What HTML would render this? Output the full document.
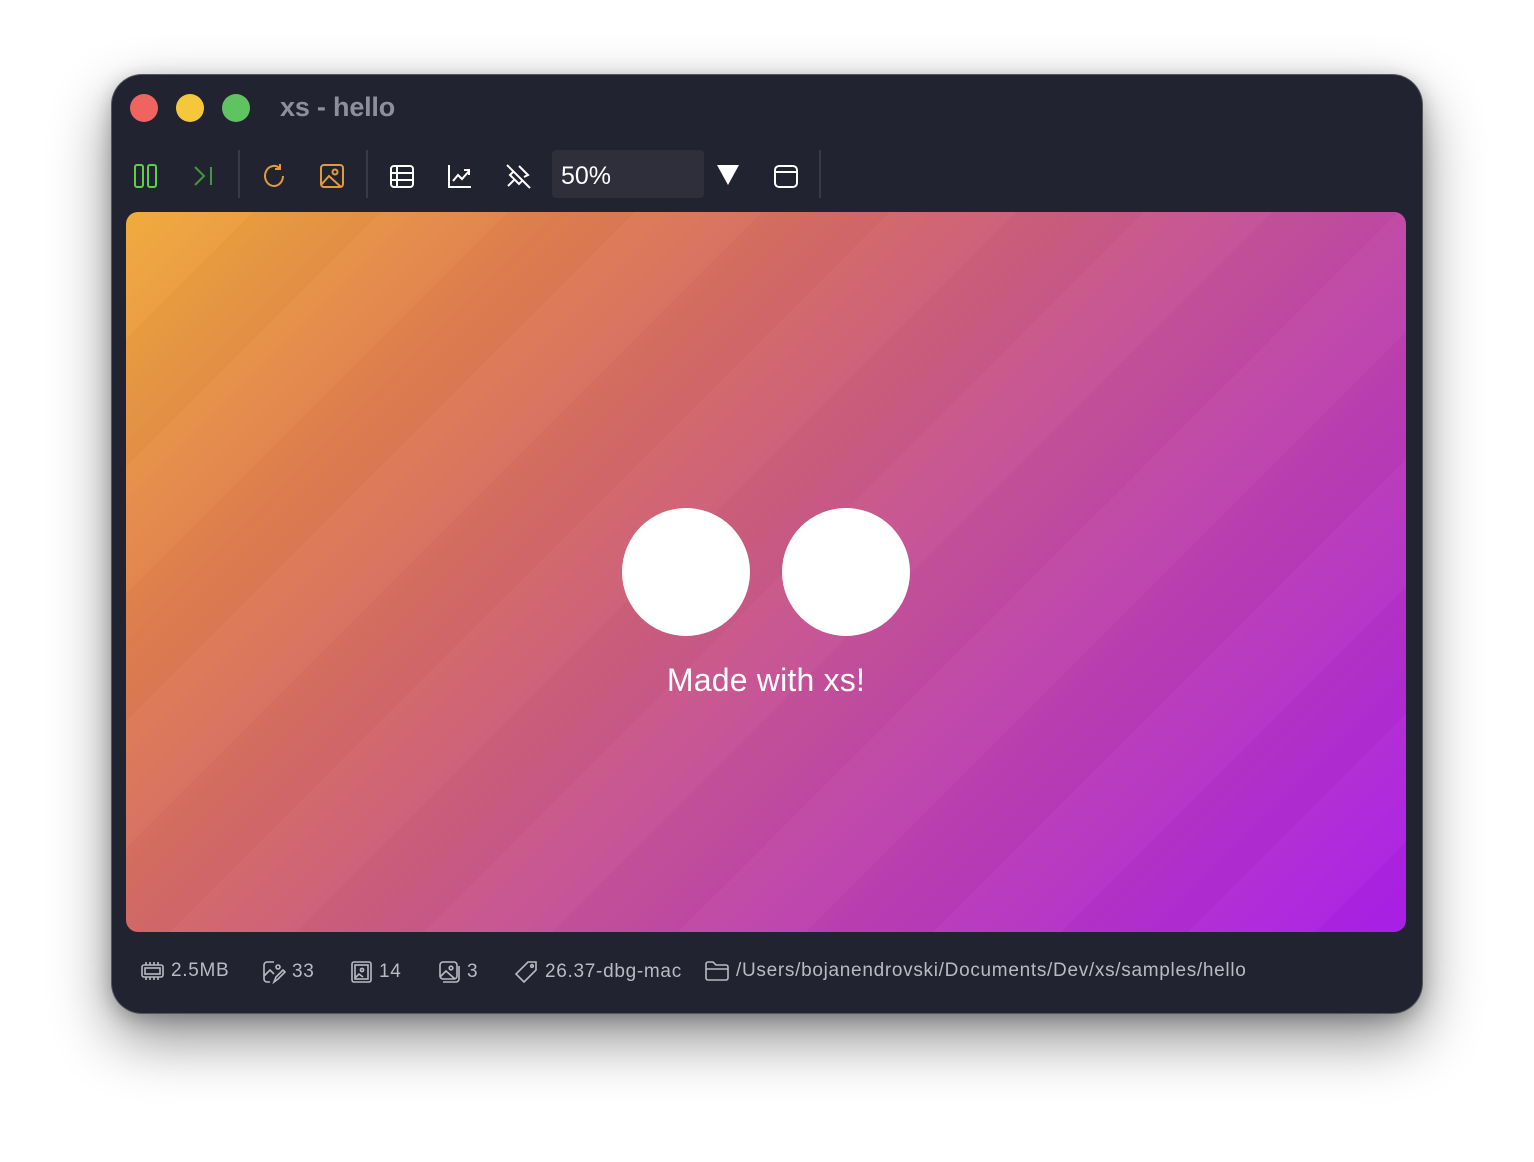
<!DOCTYPE html>
<html><head><meta charset="utf-8"><style>
html,body{margin:0;padding:0;width:1534px;height:1162px;background:#fff;overflow:hidden;font-family:"Liberation Sans",sans-serif}
.win{position:absolute;left:112px;top:75px;width:1310px;height:938px;border-radius:30px;background:#222330;box-shadow:0 0 0 1px #55565e,0 25px 60px rgba(0,0,0,.45),0 5px 20px rgba(0,0,0,.25)}
.dot{position:absolute;top:94px;width:28px;height:28px;border-radius:50%}
.title{position:absolute;left:280px;top:92px;font-size:27px;font-weight:bold;color:#8e8f9c;letter-spacing:-.2px}
.sep{position:absolute;top:150px;width:2px;height:48px;background:#393a46}
.ic{position:absolute;top:162px}
.zoom{position:absolute;left:552px;top:150px;width:152px;height:48px;background:#2f2f3c;border-radius:4px;color:#fff;font-size:25px;line-height:52px;padding-left:9px;box-sizing:border-box}
.canvas{position:absolute;left:126px;top:212px;width:1280px;height:720px;border-radius:12px;overflow:hidden;
background:linear-gradient(135deg,#f0aa3a 0%,#df7e4f 22%,#d0646e 40%,#c4509a 58%,#b93bb8 75%,#a91fea 100%)}
.stripes{position:absolute;inset:0;background:repeating-linear-gradient(135deg,rgba(255,255,255,.02) 0 90px,rgba(0,0,0,.015) 90px 180px)}
.c{position:absolute;top:296px;width:128px;height:128px;border-radius:50%;background:#fff}
.made{position:absolute;left:0;right:0;top:450px;text-align:center;color:#fff;font-size:32px;font-family:"Liberation Sans",sans-serif;letter-spacing:.2px}
.st{position:absolute;top:960px;color:#b9bac4;font-size:19px;display:flex;align-items:center;gap:6px;letter-spacing:.7px}
</style></head><body>
<div class="win"></div>
<div class="dot" style="left:130px;background:#ef6461"></div>
<div class="dot" style="left:176px;background:#f5c83b"></div>
<div class="dot" style="left:222px;background:#5fc35f"></div>
<div class="title">xs - hello</div>

<svg class="ic" style="left:132px" width="28" height="28" viewBox="0 0 28 28" fill="none" stroke="#5fcf48" stroke-width="2"><rect x="3" y="3" width="8" height="22" rx="2"/><rect x="16" y="3" width="8" height="22" rx="2"/></svg>
<svg class="ic" style="left:190px" width="28" height="28" viewBox="0 0 28 28" fill="none" stroke="#3f9a3a" stroke-width="2"><path d="M5 5l9 9-9 9M21 5v18"/></svg>
<div class="sep" style="left:238px"></div>
<svg class="ic" style="left:260px" width="28" height="28" viewBox="0 0 28 28" fill="none" stroke="#e39a3c" stroke-width="2"><path d="M23 14a9 10 0 1 1-3-7.5"/><path d="M20 2v5h-5"/></svg>
<svg class="ic" style="left:318px" width="28" height="28" viewBox="0 0 28 28" fill="none" stroke="#e39a3c" stroke-width="2"><rect x="3" y="3" width="22" height="22" rx="3"/><circle cx="17" cy="10" r="2.5"/><path d="M3 23l8-9 12 11"/></svg>
<div class="sep" style="left:366px"></div>
<svg class="ic" style="left:388px" width="28" height="28" viewBox="0 0 28 28" fill="none" stroke="#fff" stroke-width="2"><rect x="3" y="4" width="22" height="21" rx="3"/><path d="M3 11h22M3 18h22M9 4v21"/></svg>
<svg class="ic" style="left:446px" width="28" height="28" viewBox="0 0 28 28" fill="none" stroke="#fff" stroke-width="2"><path d="M3 3v22h22M7 19l5-6 4 4 7-8M18 8h5v5"/></svg>
<svg class="ic" style="left:504px" width="28" height="28" viewBox="0 0 28 28" fill="none" stroke="#fff" stroke-width="2"><path d="M3 3l23 23M15 4l9 9-4 2M10 9l-4 4 9 9 4-4M10 18l-6 6"/></svg>
<div class="zoom">50%</div>
<svg class="ic" style="left:716px;top:164px" width="24" height="22" viewBox="0 0 24 22"><path d="M1 1h22L12 21z" fill="#fff"/></svg>
<svg class="ic" style="left:772px" width="28" height="28" viewBox="0 0 28 28" fill="none" stroke="#fff" stroke-width="2"><rect x="3" y="4" width="22" height="21" rx="4"/><path d="M3 10h22"/></svg>
<div class="sep" style="left:819px"></div>

<div class="canvas"><div class="stripes"></div>
<div class="c" style="left:496px"></div><div class="c" style="left:656px"></div>
<div class="made">Made with xs!</div></div>

<div class="st" style="left:140px"><svg width="25" height="22" viewBox="0 0 25 22" fill="none" stroke="#b9bac4" stroke-width="1.6"><rect x="2" y="5" width="21" height="12" rx="2"/><rect x="5" y="8" width="15" height="6"/><path d="M6 2v3M10 2v3M14 2v3M18 2v3M6 17v3M10 17v3M14 17v3M18 17v3"/></svg>2.5MB</div>
<div class="st" style="left:262px"><svg width="24" height="24" viewBox="0 0 24 24" fill="none" stroke="#b9bac4" stroke-width="1.6"><path d="M12 2H5a3 3 0 0 0-3 3v14a3 3 0 0 0 3 3h3M2 16l6-6 4 4"/><circle cx="16" cy="7" r="2"/><path d="M12 22l2-5 7-7 2 2-7 7z"/></svg>33</div>
<div class="st" style="left:350px"><svg width="23" height="24" viewBox="0 0 23 24" fill="none" stroke="#b9bac4" stroke-width="1.6"><rect x="2" y="2" width="19" height="20" rx="2"/><rect x="5" y="5" width="13" height="14"/><circle cx="12" cy="10" r="1.6"/><path d="M5 18l4-4 4 3"/></svg>14</div>
<div class="st" style="left:438px"><svg width="23" height="24" viewBox="0 0 23 24" fill="none" stroke="#b9bac4" stroke-width="1.6"><rect x="2" y="2" width="17" height="17" rx="3"/><circle cx="13" cy="8" r="1.8"/><path d="M2 17l6-6 9 8M5 22h13a3 3 0 0 0 3-3V6"/></svg>3</div>
<div class="st" style="left:514px"><svg width="25" height="24" viewBox="0 0 25 24" fill="none" stroke="#b9bac4" stroke-width="1.6"><path d="M14 2h8v8L10 22 2 14z"/><circle cx="18" cy="6" r="1.3"/></svg>26.37-dbg-mac</div>
<div class="st" style="left:704px"><svg width="26" height="22" viewBox="0 0 26 22" fill="none" stroke="#b9bac4" stroke-width="1.6"><path d="M2 4a2 2 0 0 1 2-2h5l3 3h10a2 2 0 0 1 2 2v11a2 2 0 0 1-2 2H4a2 2 0 0 1-2-2zM2 9h22"/></svg>/Users/bojanendrovski/Documents/Dev/xs/samples/hello</div>
</body></html>
